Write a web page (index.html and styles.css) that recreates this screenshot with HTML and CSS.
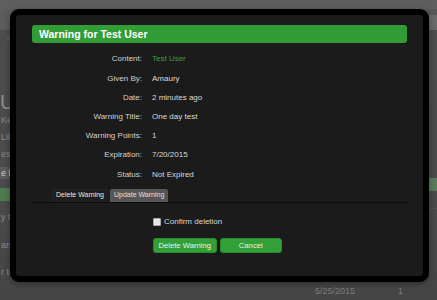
FILE: index.html
```html
<!DOCTYPE html>
<html>
<head>
<meta charset="utf-8">
<link rel="stylesheet" href="styles.css">
</head>
<body>
<div class="page">
  <div class="topbar"></div>
  <div class="subbar">
    <div class="sub-left"></div>
    <div class="sub-right"></div>
  </div>
  <div class="body">
    <div class="side-left">
      <div class="nav-item">N</div>
      <div class="big">User</div>
      <div class="small">Kek</div>
      <div class="small">Like</div>
      <div class="small">ess</div>
      <div class="boxed">e Pr</div>
      <div class="greenbar"></div>
      <div class="small t1">y test</div>
      <div class="small t2">and</div>
      <div class="small t3">r test</div>
    </div>
    <div class="main"></div>
    <div class="side-right">
      <div class="green-r"></div>
      <div class="line-r"></div>
    </div>
  </div>
  <div class="footer-row">
    <span class="date">5/25/2015</span>
    <span class="count">1</span>
  </div>
</div>

<div class="modal">
  <div class="modal-title">Warning for Test User</div>
  <div class="info">
    <div class="label">Content:</div><div class="value"><span class="link">Test User</span></div>
    <div class="label">Given By:</div><div class="value">Amaury</div>
    <div class="label">Date:</div><div class="value">2 minutes ago</div>
    <div class="label">Warning Title:</div><div class="value">One day test</div>
    <div class="label">Warning Points:</div><div class="value">1</div>
    <div class="label">Expiration:</div><div class="value">7/20/2015</div>
    <div class="label">Status:</div><div class="value">Not Expired</div>
  </div>
  <div class="tabs">
    <div class="tab active">Delete Warning</div>
    <div class="tab">Update Warning</div>
  </div>
  <div class="form">
    <label class="confirm"><input type="checkbox" class="check"><span>Confirm deletion</span></label>
    <div class="buttons">
      <button class="btn btn-delete">Delete Warning</button>
      <button class="btn btn-cancel">Cancel</button>
    </div>
  </div>
</div>
</body>
</html>
```

FILE: styles.css
```css
html, body {
  margin: 0;
  padding: 0;
}
body {
  width: 437px;
  height: 300px;
  overflow: hidden;
  position: relative;
  font-family: "Liberation Sans", Arial, sans-serif;
  background: #4a4a4a;
}
.page {
  height: 300px;
  display: flex;
  flex-direction: column;
  background: linear-gradient(180deg, #4d4d4d 0%, #4a4a4a 70%, #454545 100%);
}
.topbar {
  height: 9px;
  background: #5e5e5e;
}
.subbar {
  height: 21px;
  display: flex;
  justify-content: space-between;
  background: #575757;
}
.sub-left {
  width: 12px;
  background: #5c5c5c;
}
.sub-right {
  width: 10px;
  margin-top: 6px;
  background: #6a6a6a;
}
.body {
  flex: 1;
  display: flex;
}
.side-left {
  width: 40px;
  color: #8a8a8a;
  font-size: 9px;
}
.nav-item {
  margin: 5px 0 0 7px;
  font-size: 7px;
  color: #6d6d6d;
}
.big {
  margin-top: 50px;
  font-size: 20px;
  line-height: 20px;
  color: #8d8d8d;
}
.small {
  height: 17px;
  line-height: 17px;
  padding-left: 1px;
  white-space: nowrap;
}
.boxed {
  margin-top: 4px;
  height: 12px;
  line-height: 12px;
  background: #5b5b5b;
  color: #cfcfcf;
  padding-left: 1px;
}
.greenbar {
  margin-top: 9px;
  height: 13px;
  background: #4f7a4f;
}
.t1 { margin-top: 8px; }
.t2 { margin-top: 11px; }
.t3 { margin-top: 10px; }
.main {
  flex: 1;
}
.side-right {
  width: 10px;
  display: flex;
  flex-direction: column;
}
.green-r {
  margin-top: 148px;
  height: 13px;
  background: #5c7a5c;
}
.line-r {
  margin-top: 17px;
  height: 1px;
  background: #555;
}
.footer-row {
  height: 18px;
  display: flex;
  align-items: center;
  font-size: 9px;
  color: #7c7c7c;
}
.date {
  margin-left: 315px;
}
.count {
  margin-left: 43px;
}

/* modal */
.modal {
  position: absolute;
  left: 10px;
  top: 9px;
  width: 419px;
  height: 273px;
  box-sizing: border-box;
  border: 6px solid #000;
  border-radius: 9px;
  background: #1b1b1b;
  padding: 10px 16px 0 16px;
  box-shadow: 0 2px 6px rgba(0,0,0,0.35);
}
.modal-title {
  height: 18px;
  line-height: 18px;
  background: #329c36;
  border-radius: 3px;
  color: #fff;
  font-weight: bold;
  font-size: 10.5px;
  padding-left: 7px;
}
.info {
  margin-top: 6.4px;
  display: grid;
  grid-template-columns: 110px 1fr;
  column-gap: 10px;
  font-size: 8px;
  line-height: 19.2px;
}
.label {
  text-align: right;
  color: #d2d2d2;
}
.value {
  color: #dadada;
}
.link {
  color: #3f9c3f;
}
.tabs {
  margin-top: 5.5px;
  display: flex;
  align-items: flex-end;
  padding-left: 19.5px;
  border-bottom: 1px solid #0c0c0c;
  font-size: 7px;
}
.tab {
  height: 12.5px;
  line-height: 12.5px;
  padding: 0 4px;
  color: #e0e0e0;
  background: #565656;
  border-radius: 2px 2px 0 0;
  margin-right: 1.5px;
  white-space: nowrap;
}
.tab.active {
  background: #1e1e1e;
  color: #e8e8e8;
  box-shadow: inset 1px 1px 0 #262626;
  padding: 0 4.5px;
}
.form {
  padding-left: 120.5px;
}
.confirm {
  margin-top: 14px;
  display: flex;
  align-items: center;
  gap: 3.5px;
  font-size: 8px;
  color: #d8d8d8;
  height: 10px;
}
.check {
  appearance: none;
  -webkit-appearance: none;
  margin: 0;
  width: 8px;
  height: 8px;
  box-sizing: border-box;
  background: #e6e6e6;
  border: 1px solid #a8a8a8;
  border-radius: 1px;
}
.buttons {
  margin-top: 11.5px;
  display: flex;
  gap: 2.5px;
}
.btn {
  height: 14.5px;
  box-sizing: border-box;
  border: 1px solid #2b8a2f;
  border-radius: 3px;
  background: #33a037;
  color: #e8f0e8;
  font-family: "Liberation Sans", Arial, sans-serif;
  font-size: 7.7px;
  padding: 0;
  line-height: 12px;
  text-align: center;
}
.btn-delete {
  width: 64.5px;
}
.btn-cancel {
  width: 62.5px;
}
```
